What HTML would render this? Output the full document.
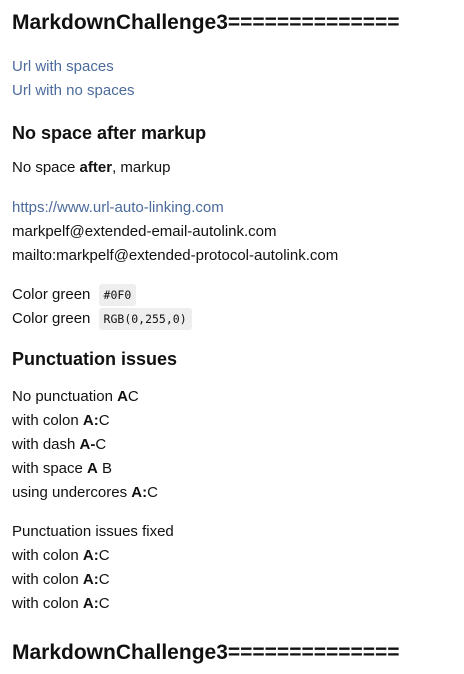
<!DOCTYPE html>
<html><head><meta charset="utf-8"><style>
body{margin:0;width:464px;height:674px;background:#fff;font-family:"Liberation Sans",Arial,sans-serif;color:#111;font-size:15px;position:relative;overflow:hidden}
div{position:absolute;left:12px;line-height:24px;white-space:nowrap}
.h1{font-size:21px;font-weight:bold;line-height:28px}
.h2{font-size:18px;font-weight:bold;line-height:26px}
a{color:#4b6b9b;text-decoration:none}
code{font-family:"DejaVu Sans Mono","Liberation Mono",monospace;font-size:11.5px;background:#eee;border-radius:3px;padding:4px 5px;margin-left:4px}
</style></head><body>
<div class="h1" style="top:9px">MarkdownChallenge3==============</div>
<div style="top:55px"><a>Url with spaces</a></div>
<div style="top:79px"><a>Url with no spaces</a></div>
<div class="h2" style="top:120px">No space after markup</div>
<div style="top:156px">No space <b>after</b>, markup</div>
<div style="top:196px"><a>https://www.url-auto-linking.com</a></div>
<div style="top:220px">markpelf@extended-email-autolink.com</div>
<div style="top:244px">mailto:markpelf@extended-protocol-autolink.com</div>
<div style="top:283px">Color green <code>#0F0</code></div>
<div style="top:307px">Color green <code>RGB(0,255,0)</code></div>
<div class="h2" style="top:346px">Punctuation issues</div>
<div style="top:385px">No punctuation <b>A</b>C</div>
<div style="top:409px">with colon <b>A:</b>C</div>
<div style="top:433px">with dash <b>A-</b>C</div>
<div style="top:457px">with space <b>A</b> B</div>
<div style="top:481px">using undercores <b>A:</b>C</div>
<div style="top:520px">Punctuation issues fixed</div>
<div style="top:544px">with colon <b>A:</b>C</div>
<div style="top:568px">with colon <b>A:</b>C</div>
<div style="top:592px">with colon <b>A:</b>C</div>
<div class="h1" style="top:639px">MarkdownChallenge3==============</div>
</body></html>
